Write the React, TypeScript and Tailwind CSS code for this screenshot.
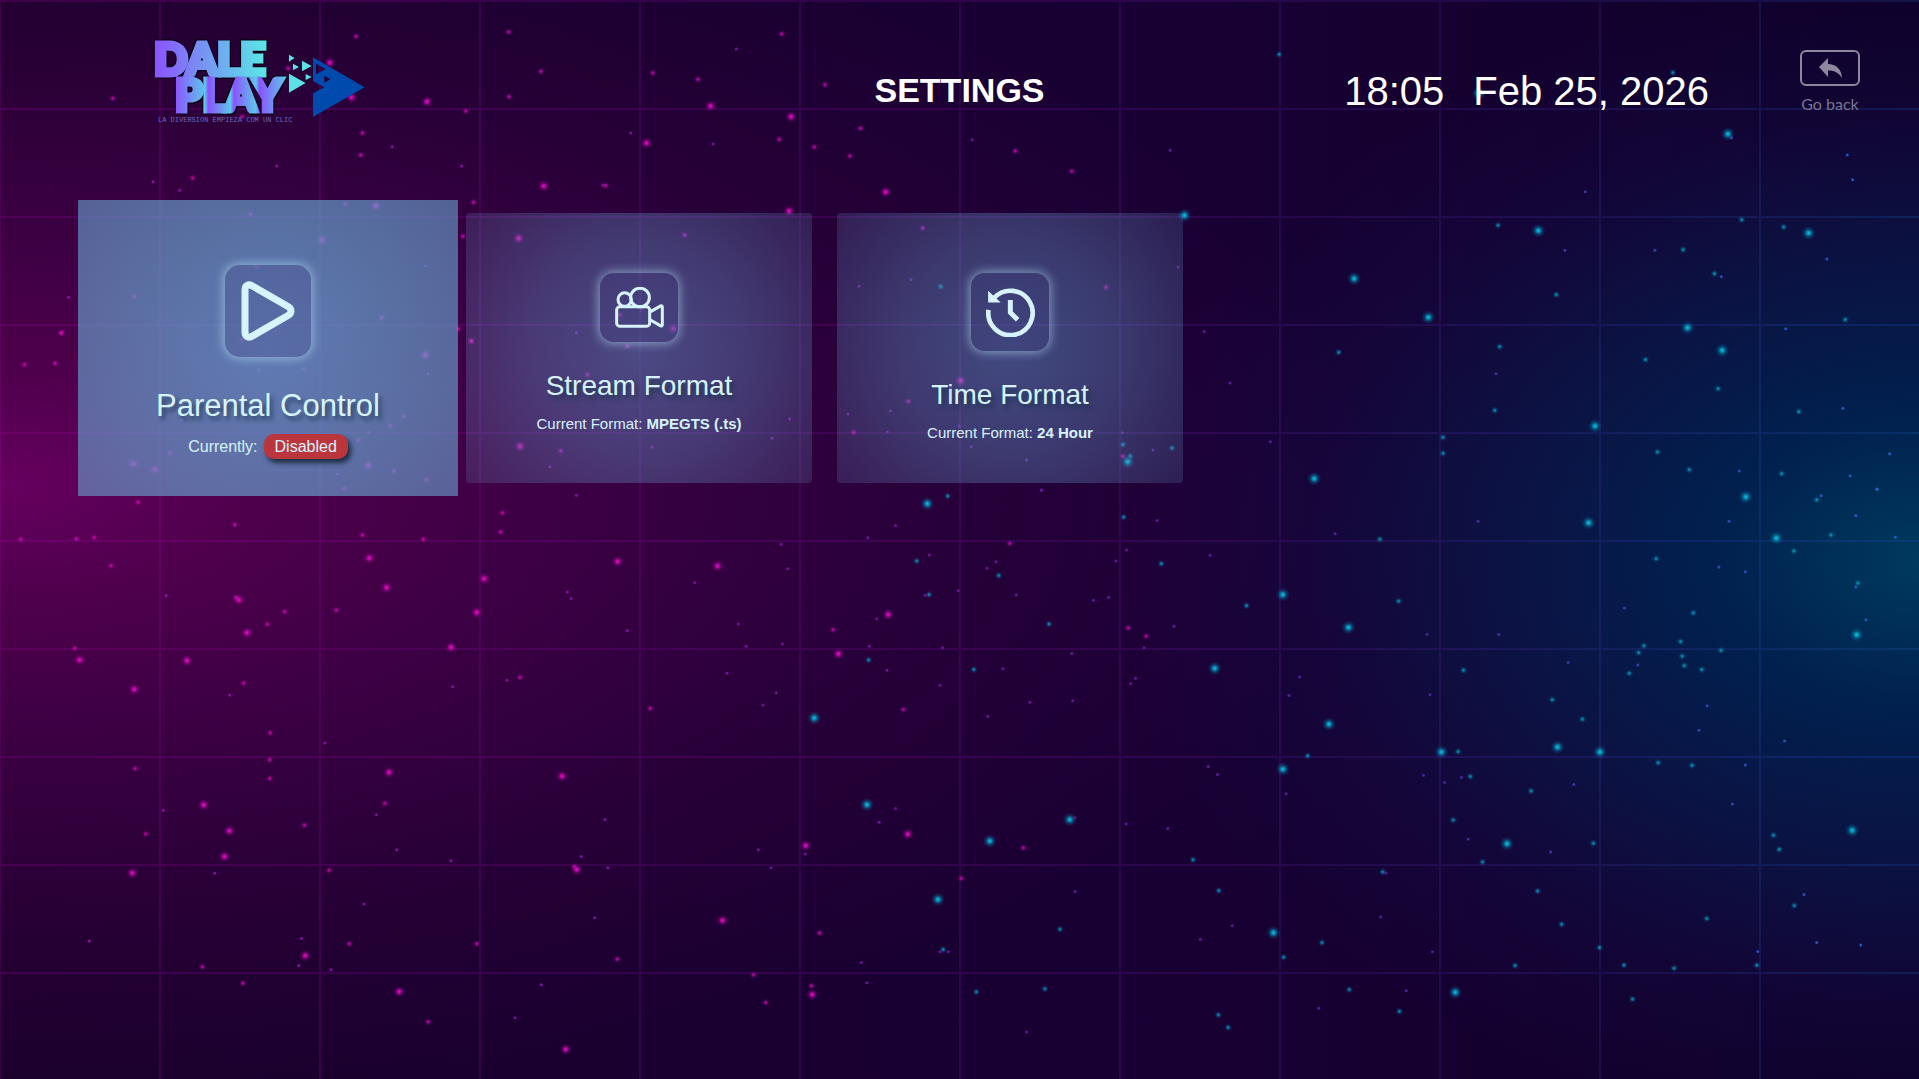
import type { ReactNode } from "react";
import clsx from "clsx";

type StarKind = "pink" | "pinkDot" | "cyan" | "cyanDot" | "speck";

type StarTile = {
  x: number;
  y: number;
  w: number;
  h: number;
  // size of the tile in its own units
  uw: number;
  uh: number;
  stars: Partial<Record<StarKind, string>>;
};

// The star map is kept as tiles, every tile with its own unit grid.
const TILES: StarTile[] = [
  {
    x: 0, y: 0, w: 640, h: 240, uw: 1568, uh: 720,
    stars: {
      pink: "808,188 861,292 1046,305 1332,558",
      pinkDot: "872,109 1246,96 1325,214 706,205 276,295 1247,290 1141,333 888,399 884,465 593,350 472,534 1160,607 1484,557 1134,709",
      speck: "961,440 678,498 1131,498 375,545 440,571 1545,399 1477,556",
    },
  },
  {
    x: 640, y: 0, w: 640, h: 240, uw: 1568, uh: 720,
    stars: {
      pink: "173,318 370,350 16,429 602,576 365,633",
      pinkDot: "347,102 31,219 142,238 453,254 540,385 341,418 427,441 514,468 919,453 1058,514",
      cyan: "1334,646",
      cyanDot: "1566,163",
      speck: "236,147 179,432 814,419 1299,451",
    },
  },
  {
    x: 1280, y: 0, w: 639, h: 490, uw: 1568, uh: 1470,
    stars: {
      cyan: "488,280 1099,402 634,692 1297,699 182,836 364,952 1000,983 1085,1051 773,1278 84,1436",
      cyanDot: "964,218 535,676 1133,659 1236,681 989,749 1066,821 678,884 1387,959 144,1057 539,1040 897,1079 1075,1166 527,1231 1273,1235 400,1312 400,1360 926,1356 1004,1409 1231,1421",
      speck: "1108,413 1392,465 1405,539 749,575 699,751 920,751 1342,777 1083,830 1241,986 530,1121 1381,1225 1496,1361 1127,1413 1399,1427 1465,1467",
    },
  },
  {
    x: 0, y: 480, w: 640, h: 600, uw: 1568, uh: 1568,
    stars: {
      pink: "905,204 1513,213 1186,258 947,281 585,313 1168,346 605,399 1105,437 195,470 458,472 329,547 953,764 1377,774 499,849 562,917 550,984 324,1027 1413,1018 748,1243 978,1337 1386,1488",
      pinkDot: "338,58 575,117 51,155 187,154 231,150 888,144 1037,155 1231,86 1226,136 272,224 578,307 697,344 824,340 655,377 183,440 597,531 1274,516 662,661 661,731 661,780 331,754 943,845 357,925 746,902 806,1020 1407,1010 856,1212 1168,1212 496,1272 595,1315 1512,1252 1049,1416",
      speck: "1412,40 407,302 1390,293 1399,310 1537,393 563,562 1109,540 1242,523 796,687 400,863 922,875 1482,887 972,966 1105,995 1424,984 1489,1013 526,1028 892,1108 1457,1144 219,1205 739,1198 732,1269 811,1280 1326,1319 1262,1405",
    },
  },
  {
    x: 640, y: 480, w: 640, h: 599, uw: 1568, uh: 1568,
    stars: {
      pink: "190,225 608,352 486,455 656,927 406,957 202,1153 422,1347",
      pinkDot: "906,166 473,392 1196,387 1240,409 25,598 645,601 939,963 787,1043 440,1186 278,1295 420,1324 308,1368",
      cyan: "704,62 427,623 1408,493 556,850 1053,889 857,945 730,1098 1552,1185",
      cyanDot: "754,42 1185,97 678,212 1277,219 879,250 708,300 1486,329 1002,377 560,471 818,496 1355,994 1418,1075 1029,1176 743,1229 824,1340 992,1332 1417,1400 1441,1433",
      speck: "983,27 626,119 1267,106 558,151 346,168 709,196 872,214 850,231 1192,183 1166,212 1397,197 362,232 134,269 698,302 780,290 922,301 1111,315 1148,307 241,377 580,363 1308,383 260,435 349,429 562,435 741,439 1235,439 1058,454 213,506 605,498 889,494 334,557 301,589 735,537 1214,519 1202,533 955,582 1060,578 852,619 1392,750 1415,771 626,860 586,896 1065,884 1191,900 1293,912 290,968 405,979 321,1015 1066,1077 1451,1167 1373,1202 735,1235 755,1235 542,1263 556,1316 947,1445",
    },
  },
  {
    x: 1280, y: 480, w: 639, h: 599, uw: 1568, uh: 1568,
    stars: {
      cyan: "1143,44 757,112 1218,152 7,300 168,386 1415,405 120,639 396,712 681,699 785,712 7,757 1404,917 557,952 430,1341",
      cyanDot: "1317,52 245,155 1352,144 1261,186 923,206 1418,270 291,317 1014,348 983,423 893,434 880,452 987,461 1082,446 992,486 1035,496 857,506 450,498 668,575 742,626 68,722 437,711 928,740 1011,747 467,776 616,814 425,890 1211,930 769,951 1225,967 497,1000 252,1026 632,1076 1262,1114 1047,1148 691,1163 103,1211 9,1249 784,1224 577,1271 844,1270 967,1278 1170,1270 170,1334 293,1391 865,1359",
      speck: "1465,24 1328,41 1413,93 486,108 1102,108 135,141 1510,150 1077,228 1142,240 1413,280 845,335 1438,366 361,404 537,404 707,478 878,484 48,516 22,564 368,562 1048,591 1028,655 1238,683 1142,746 352,773 445,779 404,792 721,797 15,821 1110,848 462,940 664,974 260,1029 1286,1085 247,1144 1317,1211 1425,1217 1172,1234 374,1235 310,1337 95,1383",
    },
  },
  {
    x: 60, y: 180, w: 420, h: 330, uw: 1260, uh: 990,
    stars: {
      pink: "947,77 786,180 1096,525 220,851 285,869 925,857",
      pinkDot: "856,72 571,102 591,260 223,350 965,413 1195,447 1234,483 732,567 545,480 1031,708 990,737 895,780 330,818 1002,873 1099,899 853,926 5,459",
      speck: "1096,257 596,570 1104,581 925,757 833,882 365,720",
    },
  },
  {
    x: 460, y: 200, w: 370, h: 300, uw: 1110, uh: 900,
    stars: {
      pink: "176,115 640,386 180,739",
      pinkDot: "674,105 34,423 502,439 383,524 302,753 480,345",
      speck: "349,398 543,332 989,657 936,715 576,741 270,800",
    },
  },
  {
    x: 820, y: 200, w: 380, h: 300, uw: 1140, uh: 900,
    stars: {
      pink: "422,542",
      pinkDot: "308,84 858,262 265,604 101,697 909,769",
      cyan: "923,785",
      cyanDot: "362,260 909,734 931,768 1056,744",
      speck: "117,259 273,239 1074,201 84,642 211,633 202,696 418,678 392,565 454,740 620,780 907,698 999,750 665,870",
    },
  },
  {
    x: 0, y: 0, w: 1919, h: 1079, uw: 1568, uh: 882,
    stars: {
      pinkDot: "20,298 50,272 45,297",
      speck: "56,243 1005,313 984,271 1038,361",
    },
  },
];

const GRID_COLS = Array.from({ length: 13 }, (_, i) => i * 160);
const GRID_ROWS = Array.from({ length: 10 }, (_, i) => i * 108);

function Star({ kind, x, y }: { kind: StarKind; x: number; y: number }) {
  switch (kind) {
    case "pink":
      return <circle cx={x} cy={y} r={6} fill="url(#glowPink)" />;
    case "cyan":
      return <circle cx={x} cy={y} r={7} fill="url(#glowCyan)" />;
    case "pinkDot":
      return <circle cx={x} cy={y} r={4} fill="url(#glowPink)" opacity={0.8} />;
    case "cyanDot":
      return <circle cx={x} cy={y} r={4} fill="url(#glowCyan)" opacity={0.75} />;
    default:
      return <circle cx={x} cy={y} r={1.5} fill="url(#speck)" opacity={0.85} />;
  }
}

function Starfield() {
  return (
    <svg
      className="absolute inset-0 size-full"
      viewBox="0 0 1919 1079"
      preserveAspectRatio="none"
      aria-hidden="true"
    >
      <defs>
        <radialGradient id="glowPink">
          <stop offset="0" stopColor="#e410c0" />
          <stop offset="0.3" stopColor="#d00cb4" stopOpacity="0.75" />
          <stop offset="0.6" stopColor="#c000b0" stopOpacity="0.28" />
          <stop offset="1" stopColor="#c000b0" stopOpacity="0" />
        </radialGradient>
        <radialGradient id="glowCyan">
          <stop offset="0" stopColor="#10c8e8" />
          <stop offset="0.3" stopColor="#06a8cc" stopOpacity="0.75" />
          <stop offset="0.6" stopColor="#0088b0" stopOpacity="0.3" />
          <stop offset="1" stopColor="#0080b0" stopOpacity="0" />
        </radialGradient>
        <linearGradient id="speck" gradientUnits="userSpaceOnUse" x1="0" y1="0" x2="1919" y2="0">
          <stop offset="0" stopColor="#a410b8" />
          <stop offset="0.5" stopColor="#7a12a8" />
          <stop offset="0.75" stopColor="#5028a8" />
          <stop offset="1" stopColor="#1c6cd8" />
        </linearGradient>
        <linearGradient id="gridLine" gradientUnits="userSpaceOnUse" x1="0" y1="0" x2="1919" y2="0">
          <stop offset="0" stopColor="#b400b4" />
          <stop offset="0.5" stopColor="#8a14b4" />
          <stop offset="0.8" stopColor="#5034b4" />
          <stop offset="1" stopColor="#2060c8" />
        </linearGradient>
      </defs>

      <g fill="url(#gridLine)" opacity={0.2}>
        {GRID_COLS.map((x) => (
          <rect key={x} x={x - 1} y={0} width={2} height={1079} />
        ))}
        {GRID_ROWS.map((y) => (
          <rect key={y} x={0} y={y} width={1919} height={2} />
        ))}
      </g>

      {TILES.map((tile, t) =>
        Object.entries(tile.stars).map(([kind, points]) =>
          points.split(" ").map((point) => {
            const [px, py] = point.split(",").map(Number);
            return (
              <Star
                key={`${t}-${kind}-${point}`}
                kind={kind as StarKind}
                x={tile.x + (px * tile.w) / tile.uw}
                y={tile.y + (py * tile.h) / tile.uh}
              />
            );
          })
        )
      )}
    </svg>
  );
}

function Logo() {
  return (
    <svg viewBox="0 0 260 120" className="h-[120px] w-[260px]" role="img" aria-label="Dale Play">
      <defs>
        <linearGradient id="dale" gradientUnits="userSpaceOnUse" x1="24" y1="0" x2="140" y2="0">
          <stop offset="0" stopColor="#8c52ff" />
          <stop offset="0.92" stopColor="#5ce1e6" />
        </linearGradient>
        <linearGradient id="play" gradientUnits="userSpaceOnUse" x1="45" y1="0" x2="156" y2="0">
          <stop offset="0" stopColor="#8c52ff" />
          <stop offset="0.27" stopColor="#5cc8ea" />
          <stop offset="0.3" stopColor="#8c52ff" />
          <stop offset="0.5" stopColor="#5cc8ea" />
          <stop offset="0.53" stopColor="#8c52ff" />
          <stop offset="0.73" stopColor="#5cc8ea" />
          <stop offset="0.76" stopColor="#8c52ff" />
          <stop offset="1" stopColor="#5cc8ea" />
        </linearGradient>
      </defs>
      <g
        className="font-[Lato,sans-serif] text-[44px] font-black [filter:drop-shadow(1px_1px_0_#05000c)_drop-shadow(-1px_-1px_0_#05000c)]"
        strokeWidth="5"
        strokeLinejoin="miter"
      >
        <text x="24" y="55" fill="url(#dale)" stroke="url(#dale)">DALE</text>
        <text x="45" y="91" fill="url(#play)" stroke="url(#play)">PLAY</text>
      </g>
      <text x="28" y="102" className="font-['Liberation_Mono',monospace] text-[7px]" fill="#6a6ac0">
        LA DIVERSION EMPIEZA COM UN CLIC
      </text>
      <g transform="scale(0.3333)">
        <path
          fill="#5ce1e6"
          d="M477 104v21l17-11zM489 131v20l18-10zM516 122v32l29-16zM527 162v18l18-9zM477 161v57l50-29z"
        />
        <path
          fill="#004aad"
          fillRule="evenodd"
          d="M549 112l155 90-155 89v-71l34-18-34-19zM558 131v32l29-16zM583 167v21l18-10z"
        />
      </g>
    </svg>
  );
}

function PlayIcon() {
  return (
    <svg viewBox="0 0 54 60" className="h-[60px] w-[54px]" fill="none" stroke="currentColor" aria-hidden="true">
      <path
        d="M4 9v42c0 4.500 3.500 6.500 7.500 4L47 34.500c4-2.500 4-6.500 0-9L11.500 5C7.500 2.500 4 4.500 4 9z"
        strokeWidth="7"
        strokeLinejoin="round"
      />
    </svg>
  );
}

function CameraIcon() {
  return (
    <svg viewBox="0 0 147 122" className="h-[41px] w-[49px]" fill="none" stroke="currentColor" strokeWidth="9" strokeLinejoin="round" aria-hidden="true">
      <circle cx="29" cy="37" r="20" />
      <circle cx="75" cy="31" r="28" />
      <rect x="5" y="59" width="99" height="58" rx="9" />
      <path d="M104 75l33-19q5-2 5 4v52q0 6-5 4l-33-19" />
    </svg>
  );
}

function HistoryIcon() {
  return (
    <svg viewBox="0 0 147 148" className="h-[49px] w-[49px]" fill="none" stroke="currentColor" aria-hidden="true">
      <path d="M7 66A67 67 0 1 0 24 30" strokeWidth="14" />
      <path d="M6 8v36h38z" fill="currentColor" stroke="none" />
      <path d="M73 36v38l22 22" strokeWidth="15" />
    </svg>
  );
}

function BackKeyIcon() {
  return (
    <svg viewBox="0 0 60 36" className="h-9 w-[60px]" aria-hidden="true">
      <rect x="1" y="1" width="58" height="34" rx="5" fill="none" stroke="currentColor" strokeWidth="2" />
      <path
        fill="currentColor"
        d="M19 17l9-9v6c8 0 13.500 5 14 14-3-5-7-7.500-14-7.500V27z"
      />
    </svg>
  );
}

type SettingCardProps = {
  icon: ReactNode;
  title: string;
  focused?: boolean;
  boxClassName: string;
  children: ReactNode;
};

function SettingCard({ icon, title, focused, boxClassName, children }: SettingCardProps) {
  return (
    <button
      type="button"
      className={clsx(
        "flex shrink-0 flex-col items-center text-[#d6f3ff]",
        focused
          ? "h-[296px] w-[380px] bg-[radial-gradient(circle_at_center,rgba(104,162,213,0.76),rgba(102,160,205,0.7)_50%,rgba(104,157,203,0.62))] pt-[65px]"
          : "h-[270px] w-[346px] rounded-sm bg-[radial-gradient(circle_at_center,rgba(102,162,213,0.46),rgba(102,155,205,0.37)_50%,rgba(107,145,190,0.2))] pt-[60px]"
      )}
    >
      <span
        className={clsx(
          "flex items-center justify-center bg-[#3c3078]/20 shadow-[0_0_10px_2px_rgba(190,235,255,0.5)]",
          boxClassName
        )}
      >
        {icon}
      </span>
      <span
        className={clsx(
          "[text-shadow:3px_4px_4px_rgba(20,50,70,0.7)]",
          focused ? "mt-[31px] text-[31px] leading-9" : "mt-[28px] text-[28px] leading-8"
        )}
      >
        {title}
      </span>
      {children}
    </button>
  );
}

export default function App() {
  return (
    <main className="relative min-h-screen overflow-hidden bg-[radial-gradient(ellipse_42%_54%_at_100%_52%,#003a5e_0%,rgba(0,34,80,0.95)_25%,rgba(8,26,76,0.75)_50%,rgba(20,14,70,0.4)_75%,rgba(22,4,56,0)_100%),radial-gradient(ellipse_72%_58%_at_0%_45%,#660060_0%,rgba(88,0,82,0.85)_18%,rgba(74,0,76,0.68)_42%,rgba(56,0,66,0.38)_72%,rgba(40,0,52,0)_100%),linear-gradient(to_right,#1a002b,#190034_60%,#0e0029)] font-['Liberation_Sans',Arial,sans-serif] text-white">
      <Starfield />

      <div className="relative">
        <header className="grid grid-cols-[1fr_auto_1fr] items-start px-[59px] pt-5">
          <div className="ml-[71px]">
            <Logo />
          </div>
          <h1 className="mt-[50px] text-[34px] leading-10 font-bold">SETTINGS</h1>
          <div className="flex items-start justify-end">
            <p className="mt-[47px] flex gap-[29px] text-[40px] leading-[48px] whitespace-nowrap">
              <time>18:05</time>
              <time dateTime="2026-02-25">Feb 25, 2026</time>
            </p>
            <button
              type="button"
              className="mt-[30px] ml-[91px] flex flex-col items-center gap-2 text-[#8e879e]"
            >
              <BackKeyIcon />
              <span className="font-[Lato,sans-serif] text-base leading-5 text-[#7c7590]">Go back</span>
            </button>
          </div>
        </header>

        <section aria-label="Settings" className="mt-[60px] flex items-center pl-[78px]">
          <SettingCard focused title="Parental Control" icon={<PlayIcon />} boxClassName="h-[92px] w-[86px] rounded-[15px]">
            <span className="mt-[10px] flex items-center gap-[6px] text-base leading-[25px]">
              Currently:
              <span className="rounded-[10px] bg-[#bb353d] px-[11px] shadow-[3px_4px_5px_rgba(10,30,40,0.8)]">
                Disabled
              </span>
            </span>
          </SettingCard>

          <div className="ml-2 flex gap-[25px]">
            <SettingCard title="Stream Format" icon={<CameraIcon />} boxClassName="h-[69px] w-[78px] rounded-[14px]">
              <span className="mt-3 text-[15px] leading-5">
                Current Format: <b>MPEGTS (.ts)</b>
              </span>
            </SettingCard>
            <SettingCard title="Time Format" icon={<HistoryIcon />} boxClassName="h-[78px] w-[78px] rounded-[14px]">
              <span className="mt-3 text-[15px] leading-5">
                Current Format: <b>24 Hour</b>
              </span>
            </SettingCard>
          </div>
        </section>
      </div>
    </main>
  );
}
